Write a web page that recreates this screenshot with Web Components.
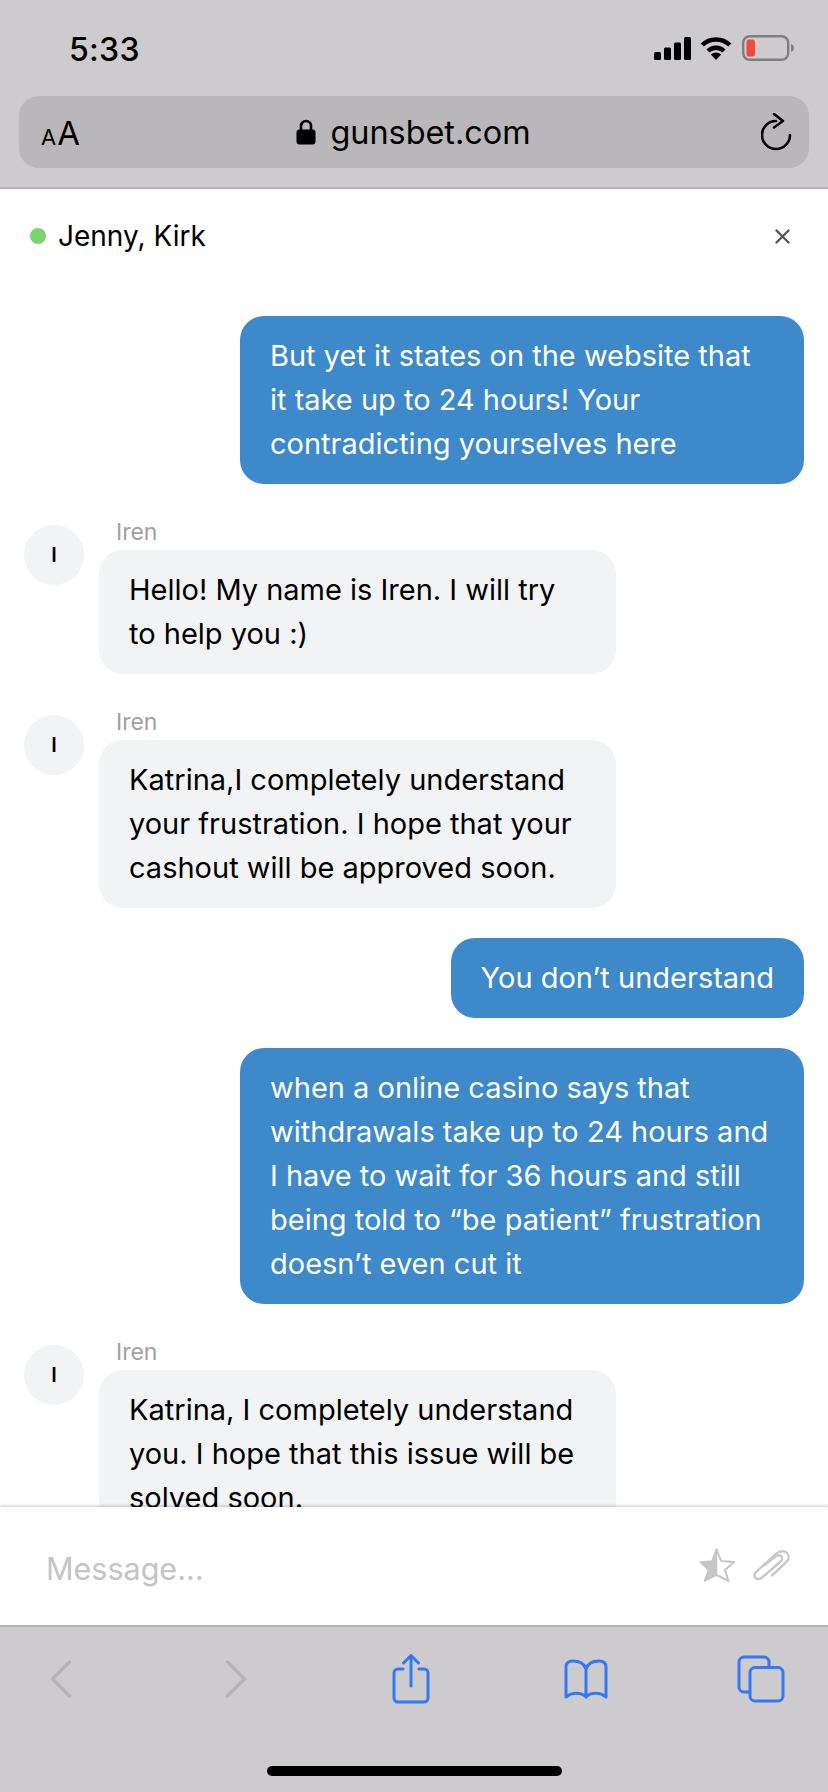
<!DOCTYPE html>
<html>
<head>
<meta charset="utf-8">
<title>Chat</title>
<style>
  html, body { margin: 0; padding: 0; background: #fff; }
  body { font-family: Inter, "Liberation Sans", sans-serif; color: #000; }
  chat-page { height: 1792px; }
</style>
</head>
<body>
<chat-page>
  <safari-top slot="top" host-name="gunsbet.com" time="5:33"></safari-top>
  <chat-header slot="header">Jenny, Kirk</chat-header>
  <chat-message out>But yet it states on the website that it take up to 24 hours! Your contradicting yourselves here</chat-message>
  <chat-message name="Iren">Hello! My name is Iren. I will try to help you :)</chat-message>
  <chat-message name="Iren">Katrina,I completely understand your frustration. I hope that your cashout will be approved soon.</chat-message>
  <chat-message out>You don’t understand</chat-message>
  <chat-message out>when a online casino says that withdrawals take up to 24 hours and I have to wait for 36 hours and still being told to “be patient” frustration doesn’t even cut it</chat-message>
  <chat-message name="Iren">Katrina, I completely understand you. I hope that this issue will be solved soon.</chat-message>
  <chat-composer slot="composer"></chat-composer>
  <safari-toolbar slot="toolbar"></safari-toolbar>
</chat-page>

<script>
class ChatPage extends HTMLElement {
  connectedCallback() {
    this.attachShadow({ mode: 'open' });
    this.shadowRoot.innerHTML = `
      <style>
        :host { display: flex; flex-direction: column; width: 828px; overflow: hidden; }
        .messages {
          flex: 1;
          min-height: 0;
          overflow: hidden;
          display: flex;
          flex-direction: column;
          padding-top: 12px;
        }
      </style>
      <slot name="top"></slot>
      <slot name="header"></slot>
      <div class="messages"><slot></slot></div>
      <slot name="composer"></slot>
      <slot name="toolbar"></slot>
    `;
  }
}

class SafariTop extends HTMLElement {
  connectedCallback() {
    this.attachShadow({ mode: 'open' });
    this.shadowRoot.innerHTML = `
      <style>
        :host {
          display: block;
          background: #cdcbcd;
          border-bottom: 2px solid #b4b3b4;
          height: 187px;
          box-sizing: content-box;
        }
        .status {
          display: flex;
          align-items: center;
          height: 96px;
          padding: 0 34px 0 69px;
          box-sizing: border-box;
        }
        .time { font-size: 32px; font-weight: 500; flex: 1; letter-spacing: 0.3px; position: relative; top: 1px; }
        .icons { display: flex; align-items: center; }
        .icons svg { display: block; }
        .wifi { margin: 0 10px 0 9px; }
        .url {
          margin: 0 19px;
          height: 72px;
          border-radius: 20px;
          background: #b9b7ba;
          display: flex;
          align-items: center;
          padding: 0 16px 0 22px;
        }
        .aa { width: 38px; display: flex; align-items: baseline; gap: 1px; line-height: 1; position: relative; top: 1px; }
        .aa .s { font-size: 22px; }
        .aa .b { font-size: 33px; }
        .site {
          flex: 1;
          display: flex;
          align-items: center;
          justify-content: center;
          gap: 14px;
          font-size: 32.4px;
          padding-right: 13px;
        }
      </style>
      <div class="status">
        <span class="time">${this.getAttribute('time')}</span>
        <div class="icons">
          <svg width="37" height="23" viewBox="0 0 37 23" fill="#000">
            <rect x="0" y="15" width="7" height="8" rx="1.5"/>
            <rect x="10" y="10.5" width="7" height="12.5" rx="1.5"/>
            <rect x="20" y="5.5" width="7" height="17.5" rx="1.5"/>
            <rect x="30" y="0" width="7" height="23" rx="1.5"/>
          </svg>
          <svg class="wifi" width="32" height="24" viewBox="0 0 32 24">
            <g fill="none" stroke="#000" stroke-width="4.4">
              <path d="M2.2 9 A20 20 0 0 1 29.8 9"/>
              <path d="M8 15 A11.5 11.5 0 0 1 24 15"/>
            </g>
            <path d="M16 24 L10.8 18.6 A7.6 7.6 0 0 1 21.2 18.6 Z" fill="#000"/>
          </svg>
          <svg width="52" height="26" viewBox="0 0 52 26">
            <rect x="1.2" y="1.2" width="45" height="23.6" rx="6.5" fill="none" stroke="#7f7e7f" stroke-width="2.4"/>
            <rect x="4.5" y="4.5" width="8.5" height="17" rx="2.5" fill="#f04a3c"/>
            <path d="M49 9 C51 10 52 11.5 52 13 C52 14.5 51 16 49 17 Z" fill="#7f7e7f"/>
          </svg>
        </div>
      </div>
      <div class="url">
        <div class="aa"><span class="s">A</span><span class="b">A</span></div>
        <div class="site">
          <svg width="20" height="26" viewBox="0 0 20 26">
            <path d="M5 12 V7 a5 5 0 0 1 10 0 V12" fill="none" stroke="#000" stroke-width="2.6"/>
            <rect x="0.5" y="10.5" width="19" height="15" rx="3" fill="#000"/>
          </svg>
          <span>${this.getAttribute('host-name')}</span>
        </div>
        <svg width="32" height="38" viewBox="0 0 32 38" fill="none" stroke="#000" stroke-width="2.6" stroke-linecap="round" stroke-linejoin="round">
          <path d="M15 8 A14 14 0 1 0 29 22"/>
          <path d="M13 1 L22 8 L13 14.5"/>
        </svg>
      </div>
    `;
  }
}

class ChatHeader extends HTMLElement {
  connectedCallback() {
    this.attachShadow({ mode: 'open' });
    this.shadowRoot.innerHTML = `
      <style>
        :host {
          display: flex;
          align-items: center;
          box-sizing: border-box;
          height: 85px;
          padding: 9px 38px 0 30px;
          font-size: 28px;
          background: #fff;
        }
        .dot { width: 16px; height: 16px; border-radius: 50%; background: #7ad36e; margin-right: 12px; }
        .name { flex: 1; }
        svg { display: block; }
      </style>
      <span class="dot"></span>
      <span class="name"><slot></slot></span>
      <svg width="15" height="15" viewBox="0 0 15 15" stroke="#555" stroke-width="2.4" stroke-linecap="round">
        <path d="M1.5 1.5 L13.5 13.5 M13.5 1.5 L1.5 13.5"/>
      </svg>
    `;
  }
}

class ChatMessage extends HTMLElement {
  connectedCallback() {
    const name = this.getAttribute('name');
    this.attachShadow({ mode: 'open' });
    this.shadowRoot.innerHTML = `
      <style>
        :host {
          display: flex;
          flex: none;
          padding: 0 24px;
          margin-top: 41px;
          font-size: 29px;
          line-height: 44px;
        }
        :host([out]) { justify-content: flex-end; margin-top: 30px; }
        .avatar {
          flex: none;
          width: 60px;
          height: 60px;
          border-radius: 50%;
          background: #f2f3f5;
          margin-right: 15px;
          display: flex;
          align-items: center;
          justify-content: center;
          font-size: 20px;
          font-weight: 600;
          line-height: 1;
        }
        .name {
          font-size: 23px;
          line-height: 25px;
          color: #a0a0a2;
          padding-left: 17px;
          margin: -5px 0 5px;
        }
        .bubble {
          box-sizing: border-box;
          padding: 18px 30px;
          border-radius: 24px;
          background: #f2f3f5;
          color: #000;
          width: 517px;
        }
        :host([out]) .bubble {
          background: #3d89c9;
          color: #fff;
          width: auto;
          max-width: 564px;
        }
      </style>
      ${name ? `<div class="avatar">${name[0]}</div>` : ''}
      <div class="body">
        ${name ? `<div class="name">${name}</div>` : ''}
        <div class="bubble"><slot></slot></div>
      </div>
    `;
  }
}

class ChatComposer extends HTMLElement {
  connectedCallback() {
    this.attachShadow({ mode: 'open' });
    this.shadowRoot.innerHTML = `
      <style>
        :host {
          display: flex;
          align-items: center;
          height: 118px;
          padding: 0 38px 0 46px;
          background: #fff;
          box-shadow: 0 -1px 3px rgba(0,0,0,.22);
          position: relative;
          font-size: 30.5px;
          color: #c4c4c6;
        }
        .text { flex: 1; position: relative; top: 2px; }
        svg { display: block; }
        .star { margin-right: 17px; position: relative; top: -1px; }
      </style>
      <span class="text">Message...</span>
      <svg class="star" width="37" height="36" viewBox="0 0 37 36">
        <path d="M17.5 2 L13 14 L1 15 L9.5 23 L5.5 34 L17.5 28 Z" fill="#c6c6c8" stroke="#c6c6c8" stroke-width="1.6" stroke-linejoin="round"/>
        <path d="M17.5 2 L22 14 L35 15 L26 23 L29.5 34 L17.5 28" fill="none" stroke="#c6c6c8" stroke-width="2" stroke-linejoin="round"/>
      </svg>
      <svg class="clip" width="37" height="33" viewBox="0 0 37 33" fill="none" stroke="#c8c8ca" stroke-width="2.4" stroke-linecap="round">
        <path d="M11 15.5 L22.5 6.5 C25 4.5 27.5 5 28.5 6.5 C29.5 8 29 10.2 27 12 L9 27.5 C6.5 29.5 4 29.8 2.5 28 C1 26 1.5 23.5 3.5 21.5 L23.5 3.5 C27 0.8 31.5 0.5 34 3 C36.5 5.5 36 9.5 33 12.5 L19 25.5"/>
      </svg>
    `;
  }
}

class SafariToolbar extends HTMLElement {
  connectedCallback() {
    this.attachShadow({ mode: 'open' });
    this.shadowRoot.innerHTML = `
      <style>
        :host {
          display: block;
          height: 167px;
          background: #cdcbcd;
          border-top: 2px solid #b4b3b4;
          box-sizing: border-box;
          position: relative;
        }
        .bar {
          display: flex;
          justify-content: space-between;
          padding: 26px 43px 0 37px;
        }
        .slot { width: 48px; height: 52px; display: flex; align-items: center; justify-content: center; }
        svg { display: block; }
        .home {
          width: 295px;
          height: 10px;
          border-radius: 5px;
          background: #000;
          margin: 61px auto 0;
        }
      </style>
      <div class="bar">
        <div class="slot">
          <svg width="22" height="38" viewBox="0 0 22 38" fill="none" stroke="#b5b4b5" stroke-width="3.4" stroke-linecap="round" stroke-linejoin="round">
            <path d="M19.5 2 L2.5 19 L19.5 36"/>
          </svg>
        </div>
        <div class="slot">
          <svg width="22" height="38" viewBox="0 0 22 38" fill="none" stroke="#b5b4b5" stroke-width="3.4" stroke-linecap="round" stroke-linejoin="round">
            <path d="M2.5 2 L19.5 19 L2.5 36"/>
          </svg>
        </div>
        <div class="slot">
          <svg width="40" height="50" viewBox="0 0 40 50" fill="none" stroke="#3478f6" stroke-width="3" stroke-linecap="round" stroke-linejoin="round">
            <path d="M12 15 H7 a4 4 0 0 0 -4 4 V44 a4 4 0 0 0 4 4 H33 a4 4 0 0 0 4 -4 V19 a4 4 0 0 0 -4 -4 H28"/>
            <path d="M20 32 V2 M12.5 9 L20 1.5 L27.5 9"/>
          </svg>
        </div>
        <div class="slot">
          <svg width="44" height="40" viewBox="0 0 44 40" fill="none" stroke="#3478f6" stroke-width="3" stroke-linejoin="round">
            <path d="M22 10 C20 4 14 2 9 2 C4 2 2 4 2 8 V38 C8 33 17 33 22 38 C27 33 36 33 42 38 V8 C42 4 40 2 35 2 C30 2 24 4 22 10 Z M22 10 V37"/>
          </svg>
        </div>
        <div class="slot">
          <svg width="48" height="48" viewBox="0 0 48 48" fill="none" stroke="#3478f6" stroke-width="3" stroke-linejoin="round">
            <path d="M12 37 H7 a5 5 0 0 1 -5 -5 V7 a5 5 0 0 1 5 -5 H27 a5 5 0 0 1 5 5 V12"/>
            <rect x="13" y="12.5" width="33" height="33.5" rx="5"/>
          </svg>
        </div>
      </div>
      <div class="home"></div>
    `;
  }
}

customElements.define('chat-page', ChatPage);
customElements.define('safari-top', SafariTop);
customElements.define('chat-header', ChatHeader);
customElements.define('chat-message', ChatMessage);
customElements.define('chat-composer', ChatComposer);
customElements.define('safari-toolbar', SafariToolbar);
</script>
</body>
</html>
